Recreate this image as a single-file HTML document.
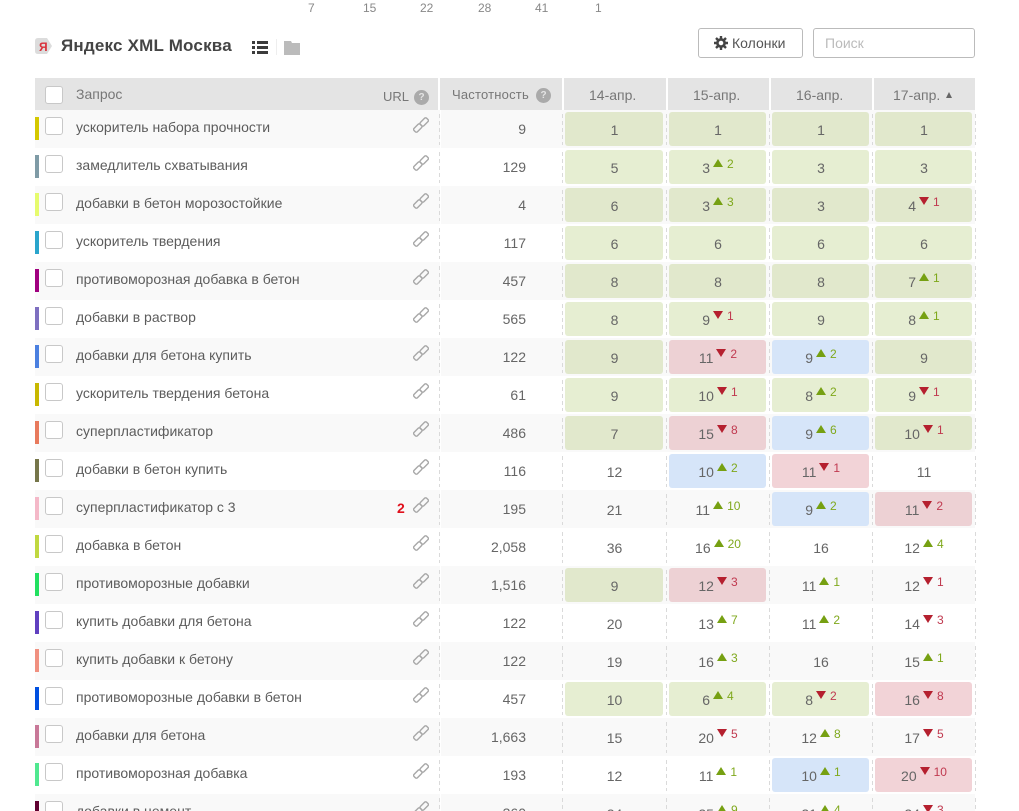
<!DOCTYPE html>
<html lang="ru"><head><meta charset="utf-8"><title>Яндекс XML Москва</title>
<style>
html,body{margin:0;padding:0;background:#fff;width:1019px;height:811px;overflow:hidden}
#w{position:absolute;left:0;top:0;width:1019px;height:811px;overflow:hidden;font-family:"Liberation Sans",sans-serif;color:#666}
.a{position:absolute;white-space:nowrap}
.top{top:1px;font-size:12px;line-height:14px;color:#888}
.h{position:absolute;top:78px;height:32px;background:#e4e4e4}
.ht{position:absolute;font-size:14px;line-height:16px;color:#777;white-space:nowrap}
.q{position:absolute;width:15px;height:15px;border-radius:50%;background:#aaa;color:#e4e4e4;font-size:10px;line-height:15px;text-align:center;font-weight:bold}
.cb{position:absolute;width:16px;height:16px;border:1px solid #c8c8c8;border-radius:3px;background:#fff}
.r{position:absolute;left:35px;width:940px;height:38px;overflow:visible}
.r::before{content:"";position:absolute;left:0;top:4px;width:941px;height:31px;background-image:repeating-linear-gradient(#dadada 0 4px,transparent 4px 7px),repeating-linear-gradient(#dadada 0 4px,transparent 4px 7px),repeating-linear-gradient(#dadada 0 4px,transparent 4px 7px),repeating-linear-gradient(#dadada 0 4px,transparent 4px 7px),repeating-linear-gradient(#dadada 0 4px,transparent 4px 7px),repeating-linear-gradient(#dadada 0 4px,transparent 4px 7px);background-size:1px 100%;background-repeat:no-repeat;background-position:404px 0,527px 0,631px 0,734px 0,837px 0,940px 0}
.o{background:#f9f9f9}
.o::after{content:"";position:absolute;left:405px;top:0;width:1px;height:38px;background:#fff}
.bar{position:absolute;left:0;top:7px;width:4px;height:23px}
.r .cb{left:10px;top:7px}
.t{position:absolute;left:41px;top:8px;font-size:14px;line-height:18px;color:#5c5c5c;white-space:nowrap}
.l{position:absolute;left:378px;top:7px;width:16px;height:16px}
.f{position:absolute;right:449px;top:10px;font-size:14px;line-height:18px;color:#666}
.c{position:absolute;top:2px;height:34px;line-height:36px;text-align:center;font-size:14px;color:#666;border-radius:3px;white-space:nowrap;z-index:1;text-indent:1px}
.c1{left:530px;width:98px}.c2{left:634px;width:97px}.c3{left:737px;width:97px}.c4{left:840px;width:97px}
.g{background:#e6eed2}.o .g{background:#e1e8cc}
.p{background:#f2d3d7}.o .p{background:#edd1d4}
.b{background:#d6e5f9}
u,s{text-decoration:none;font-size:12px;line-height:11px;position:relative;top:-5px;margin-left:3px}
u{color:#7fa81c}s{color:#c0394f}
u::before,s::before{content:"";display:inline-block;width:0;height:0;border-left:5px solid transparent;border-right:5px solid transparent;margin-right:4px;vertical-align:1px}
u::before{border-bottom:8px solid #76a012}
s::before{border-top:8px solid #b5202f}
</style></head><body><div id="w">
<svg width="0" height="0" style="position:absolute"><symbol id="k" viewBox="0 0 16 16"><g fill="none" stroke="#a8a8a8" stroke-width="1.4"><rect x="0.4" y="8.6" width="8.8" height="4.8" rx="1.5" transform="rotate(-45 4.8 11)"/><rect x="6.8" y="2.6" width="8.8" height="4.8" rx="1.5" transform="rotate(-45 11.2 5)"/></g></symbol></svg>

<div class="a top" style="left:308px">7</div>
<div class="a top" style="left:363px">15</div>
<div class="a top" style="left:420px">22</div>
<div class="a top" style="left:478px">28</div>
<div class="a top" style="left:535px">41</div>
<div class="a top" style="left:595px">1</div>

<svg class="a" style="left:35px;top:38px" width="17" height="16" viewBox="0 0 17 16"><path d="M3 0H12L17 8L12 16H3Q0 16 0 13V3Q0 0 3 0Z" fill="#dcdcdc"/><text x="4" y="13" font-size="12" font-weight="bold" fill="#d9303a" font-family="Liberation Sans,sans-serif">Я</text></svg>
<div class="a" style="left:61px;top:36px;font-size:17px;line-height:20px;font-weight:bold;color:#444;letter-spacing:.2px">Яндекс XML Москва</div>
<svg class="a" style="left:252px;top:41px" width="16" height="13" viewBox="0 0 16 13"><g fill="#3c3c3c"><rect x="0" y="0" width="3" height="3"/><rect x="5" y="0" width="11" height="3"/><rect x="0" y="5" width="3" height="3"/><rect x="5" y="5" width="11" height="3"/><rect x="0" y="10" width="3" height="3"/><rect x="5" y="10" width="11" height="3"/></g></svg>
<div class="a" style="left:276px;top:39px;width:1px;height:16px;background:#eee"></div>
<svg class="a" style="left:284px;top:41px" width="16" height="14" viewBox="0 0 16 14"><path d="M0 0H7L8 2H16V14H0Z" fill="#bbb"/></svg>

<div class="a" style="left:698px;top:28px;width:103px;height:28px;border:1px solid #bbb;border-radius:3px"></div>
<svg class="a" style="left:714px;top:36px" width="14" height="14" viewBox="0 0 14 14"><circle cx="7" cy="7" r="3.6" fill="none" stroke="#444" stroke-width="2.6"/><g stroke="#444" stroke-width="2.4"><path d="M7 0V3M7 11V14M0 7H3M11 7H14M2 2L4 4M10 10L12 12M12 2L10 4M4 10L2 12"/></g></svg>
<div class="a" style="left:732px;top:35px;font-size:14px;line-height:16px;color:#555">Колонки</div>
<div class="a" style="left:813px;top:28px;width:160px;height:28px;border:1px solid #bbb;border-radius:3px"></div>
<div class="a" style="left:825px;top:35px;font-size:14px;line-height:16px;color:#bbb">Поиск</div>

<div class="h" style="left:35px;width:403px"></div>
<div class="h" style="left:440px;width:122px"></div>
<div class="h" style="left:564px;width:102px"></div>
<div class="h" style="left:668px;width:101px"></div>
<div class="h" style="left:771px;width:101px"></div>
<div class="h" style="left:874px;width:101px"></div>
<div class="cb" style="left:45px;top:86px"></div>
<div class="ht" style="left:76px;top:86px">Запрос</div>
<div class="ht" style="left:383px;top:89px;font-size:13px">URL</div>
<div class="q" style="left:414px;top:90px">?</div>
<div class="ht" style="left:452px;top:87px;font-size:13px;letter-spacing:.2px">Частотность</div>
<div class="q" style="left:536px;top:88px">?</div>
<div class="ht" style="left:589px;top:87px">14-апр.</div>
<div class="ht" style="left:693px;top:87px">15-апр.</div>
<div class="ht" style="left:796px;top:87px">16-апр.</div>
<div class="ht" style="left:893px;top:87px">17-апр.</div>
<div class="a" style="left:946px;top:92px;width:0;height:0;border-left:3.5px solid transparent;border-right:3.5px solid transparent;border-bottom:6px solid #666"></div>

<div class="r o" style="top:110px"><i class="bar" style="background:#d4c800"></i><i class="cb"></i><span class="t">ускоритель набора прочности</span><svg class="l"><use href="#k"/></svg><span class="f">9</span><div class="c c1 g">1</div><div class="c c2 g">1</div><div class="c c3 g">1</div><div class="c c4 g">1</div></div>
<div class="r" style="top:148px"><i class="bar" style="background:#7f9ba6"></i><i class="cb"></i><span class="t">замедлитель схватывания</span><svg class="l"><use href="#k"/></svg><span class="f">129</span><div class="c c1 g">5</div><div class="c c2 g">3<u>2</u></div><div class="c c3 g">3</div><div class="c c4 g">3</div></div>
<div class="r o" style="top:186px"><i class="bar" style="background:#e6fb6e"></i><i class="cb"></i><span class="t">добавки в бетон морозостойкие</span><svg class="l"><use href="#k"/></svg><span class="f">4</span><div class="c c1 g">6</div><div class="c c2 g">3<u>3</u></div><div class="c c3 g">3</div><div class="c c4 g">4<s>1</s></div></div>
<div class="r" style="top:224px"><i class="bar" style="background:#2aa5cc"></i><i class="cb"></i><span class="t">ускоритель твердения</span><svg class="l"><use href="#k"/></svg><span class="f">117</span><div class="c c1 g">6</div><div class="c c2 g">6</div><div class="c c3 g">6</div><div class="c c4 g">6</div></div>
<div class="r o" style="top:262px"><i class="bar" style="background:#a0007f"></i><i class="cb"></i><span class="t">противоморозная добавка в бетон</span><svg class="l"><use href="#k"/></svg><span class="f">457</span><div class="c c1 g">8</div><div class="c c2 g">8</div><div class="c c3 g">8</div><div class="c c4 g">7<u>1</u></div></div>
<div class="r" style="top:300px"><i class="bar" style="background:#7e6fc0"></i><i class="cb"></i><span class="t">добавки в раствор</span><svg class="l"><use href="#k"/></svg><span class="f">565</span><div class="c c1 g">8</div><div class="c c2 g">9<s>1</s></div><div class="c c3 g">9</div><div class="c c4 g">8<u>1</u></div></div>
<div class="r o" style="top:338px"><i class="bar" style="background:#4b80e0"></i><i class="cb"></i><span class="t">добавки для бетона купить</span><svg class="l"><use href="#k"/></svg><span class="f">122</span><div class="c c1 g">9</div><div class="c c2 p">11<s>2</s></div><div class="c c3 b">9<u>2</u></div><div class="c c4 g">9</div></div>
<div class="r" style="top:376px"><i class="bar" style="background:#c8b800"></i><i class="cb"></i><span class="t">ускоритель твердения бетона</span><svg class="l"><use href="#k"/></svg><span class="f">61</span><div class="c c1 g">9</div><div class="c c2 g">10<s>1</s></div><div class="c c3 g">8<u>2</u></div><div class="c c4 g">9<s>1</s></div></div>
<div class="r o" style="top:414px"><i class="bar" style="background:#e87a5d"></i><i class="cb"></i><span class="t">суперпластификатор</span><svg class="l"><use href="#k"/></svg><span class="f">486</span><div class="c c1 g">7</div><div class="c c2 p">15<s>8</s></div><div class="c c3 b">9<u>6</u></div><div class="c c4 g">10<s>1</s></div></div>
<div class="r" style="top:452px"><i class="bar" style="background:#76764a"></i><i class="cb"></i><span class="t">добавки в бетон купить</span><svg class="l"><use href="#k"/></svg><span class="f">116</span><div class="c c1">12</div><div class="c c2 b">10<u>2</u></div><div class="c c3 p">11<s>1</s></div><div class="c c4">11</div></div>
<div class="r o" style="top:490px"><i class="bar" style="background:#f4b8c8"></i><i class="cb"></i><span class="t">суперпластификатор с 3</span><span class="a" style="left:362px;top:9px;font-size:14px;line-height:18px;font-weight:bold;color:#e0101c">2</span><svg class="l"><use href="#k"/></svg><span class="f">195</span><div class="c c1">21</div><div class="c c2">11<u>10</u></div><div class="c c3 b">9<u>2</u></div><div class="c c4 p">11<s>2</s></div></div>
<div class="r" style="top:528px"><i class="bar" style="background:#c0d840"></i><i class="cb"></i><span class="t">добавка в бетон</span><svg class="l"><use href="#k"/></svg><span class="f">2,058</span><div class="c c1">36</div><div class="c c2">16<u>20</u></div><div class="c c3">16</div><div class="c c4">12<u>4</u></div></div>
<div class="r o" style="top:566px"><i class="bar" style="background:#22e060"></i><i class="cb"></i><span class="t">противоморозные добавки</span><svg class="l"><use href="#k"/></svg><span class="f">1,516</span><div class="c c1 g">9</div><div class="c c2 p">12<s>3</s></div><div class="c c3">11<u>1</u></div><div class="c c4">12<s>1</s></div></div>
<div class="r" style="top:604px"><i class="bar" style="background:#6040c0"></i><i class="cb"></i><span class="t">купить добавки для бетона</span><svg class="l"><use href="#k"/></svg><span class="f">122</span><div class="c c1">20</div><div class="c c2">13<u>7</u></div><div class="c c3">11<u>2</u></div><div class="c c4">14<s>3</s></div></div>
<div class="r o" style="top:642px"><i class="bar" style="background:#f09080"></i><i class="cb"></i><span class="t">купить добавки к бетону</span><svg class="l"><use href="#k"/></svg><span class="f">122</span><div class="c c1">19</div><div class="c c2">16<u>3</u></div><div class="c c3">16</div><div class="c c4">15<u>1</u></div></div>
<div class="r" style="top:680px"><i class="bar" style="background:#0050e0"></i><i class="cb"></i><span class="t">противоморозные добавки в бетон</span><svg class="l"><use href="#k"/></svg><span class="f">457</span><div class="c c1 g">10</div><div class="c c2 g">6<u>4</u></div><div class="c c3 g">8<s>2</s></div><div class="c c4 p">16<s>8</s></div></div>
<div class="r o" style="top:718px"><i class="bar" style="background:#c87898"></i><i class="cb"></i><span class="t">добавки для бетона</span><svg class="l"><use href="#k"/></svg><span class="f">1,663</span><div class="c c1">15</div><div class="c c2">20<s>5</s></div><div class="c c3">12<u>8</u></div><div class="c c4">17<s>5</s></div></div>
<div class="r" style="top:756px"><i class="bar" style="background:#50e890"></i><i class="cb"></i><span class="t">противоморозная добавка</span><svg class="l"><use href="#k"/></svg><span class="f">193</span><div class="c c1">12</div><div class="c c2">11<u>1</u></div><div class="c c3 b">10<u>1</u></div><div class="c c4 p">20<s>10</s></div></div>
<div class="r o" style="top:794px"><i class="bar" style="background:#600030"></i><i class="cb"></i><span class="t">добавки в цемент</span><svg class="l"><use href="#k"/></svg><span class="f">360</span><div class="c c1">24</div><div class="c c2">25<u>9</u></div><div class="c c3">21<u>4</u></div><div class="c c4">24<s>3</s></div></div>
</div></body></html>
